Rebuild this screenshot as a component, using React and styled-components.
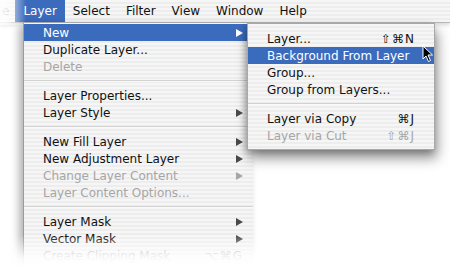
import React from 'react';
import styled, { createGlobalStyle } from 'styled-components';

const GlobalStyle = createGlobalStyle`
	html, body {
		margin: 0;
		padding: 0;
		background: #fff;
	}
`;

const stripes = `repeating-linear-gradient(to bottom, #f6f6f6 0px, #f6f6f6 2px, #ededed 2px, #ededed 4px)`;

const Page = styled.div`
	width: 450px;
	height: 277px;
	position: relative;
	overflow: hidden;
	background: #fff;
	font-family: "DejaVu Sans", "Liberation Sans", sans-serif;
	font-size: 12px;
	color: #111;
`;

const MenuBar = styled.div`
	display: flex;
	align-items: stretch;
	height: 22px;
	background: ${stripes};
	border-bottom: 1px solid #b8b8b8;
	box-shadow: 0 2px 4px rgba(0, 0, 0, 0.15);
	position: relative;

	&::before {
		content: '';
		position: absolute;
		top: 0;
		left: 0;
		bottom: -3px;
		width: 26px;
		background: linear-gradient(to right, rgba(255, 255, 255, 0.85) 20%, rgba(255, 255, 255, 0));
		z-index: 2;
	}
`;

const Title = styled.div`
	display: flex;
	align-items: center;
	padding: 0 8px;
	background: ${p => (p.$active ? '#3b6bbd' : 'transparent')};
	color: ${p => (p.$active ? '#fff' : '#111')};
`;

// tail of the "File" title, clipped by the screenshot
const Tail = styled(Title)`
	padding: 0 6px 0 2px;
	color: #888;
`;

const Body = styled.div`
	position: relative;
	padding-left: 23px;
`;

const Menu = styled.div`
	width: 229px;
	padding: 1px 0 4px;
	background: ${stripes};
	border-left: 1px solid #9a9a9a;
	box-shadow: -4px 2px 8px rgba(0, 0, 0, 0.3);
`;

const SubMenu = styled(Menu)`
	position: absolute;
	left: 247px;
	top: 0;
	width: 186px;
	padding: 6px 0 5px;
	border: 1px solid #a8a8a8;
	box-shadow: 2px 8px 12px rgba(0, 0, 0, 0.45), -2px 2px 6px rgba(0, 0, 0, 0.2);
	z-index: 3;
`;

const Item = styled.div`
	display: flex;
	align-items: center;
	height: 17px;
	padding: 0 ${p => p.$right}px 0 ${p => p.$left}px;
	background: ${p => (p.$selected ? '#3b6bbd' : 'transparent')};
	color: ${p => (p.$selected ? '#fff' : p.$disabled ? '#a6a6a6' : '#111')};
	white-space: nowrap;
`;

const Label = styled.span`
	flex: 1;
`;

const Shortcut = styled.span`
	letter-spacing: 1px;
`;

const Arrow = styled.span`
	width: 0;
	height: 0;
	border-top: 4.5px solid transparent;
	border-bottom: 4.5px solid transparent;
	border-left: 7px solid ${p => (p.$selected ? '#fff' : p.$disabled ? '#a6a6a6' : '#4a4a4a')};
`;

const Separator = styled.div`
	height: 12px;
	display: flex;
	align-items: center;

	&::after {
		content: '';
		flex: 1;
		height: 1px;
		background: #d2d2d2;
		border-bottom: 1px solid #fafafa;
	}
`;

const Fade = styled.div`
	position: absolute;
	left: 0;
	right: 0;
	bottom: 0;
	height: 42px;
	background: linear-gradient(to bottom, rgba(255, 255, 255, 0) 0%, rgba(255, 255, 255, 0.9) 55%, #fff 75%);
	z-index: 5;
`;

const Cursor = styled.svg`
	position: absolute;
	left: 422px;
	top: 45px;
	z-index: 6;
`;

const titles = ['Layer', 'Select', 'Filter', 'View', 'Window', 'Help'];

const mainItems = [
	{ label: 'New', arrow: true, selected: true },
	{ label: 'Duplicate Layer...' },
	{ label: 'Delete', disabled: true },
	null,
	{ label: 'Layer Properties...' },
	{ label: 'Layer Style', arrow: true },
	null,
	{ label: 'New Fill Layer', arrow: true },
	{ label: 'New Adjustment Layer', arrow: true },
	{ label: 'Change Layer Content', arrow: true, disabled: true },
	{ label: 'Layer Content Options...', disabled: true },
	null,
	{ label: 'Layer Mask', arrow: true },
	{ label: 'Vector Mask', arrow: true },
	{ label: 'Create Clipping Mask', shortcut: '⌥⌘G', disabled: true },
];

const subItems = [
	{ label: 'Layer...', shortcut: '⇧⌘N' },
	{ label: 'Background From Layer', selected: true },
	{ label: 'Group...' },
	{ label: 'Group from Layers...' },
	null,
	{ label: 'Layer via Copy', shortcut: '⌘J' },
	{ label: 'Layer via Cut', shortcut: '⇧⌘J', disabled: true },
];

const renderItems = (items, left, right) =>
	items.map((it, i) =>
		it === null ? (
			<Separator key={i} />
		) : (
			<Item key={i} $selected={it.selected} $disabled={it.disabled} $left={left} $right={right}>
				<Label>{it.label}</Label>
				{it.shortcut && <Shortcut>{it.shortcut}</Shortcut>}
				{it.arrow && <Arrow $selected={it.selected} $disabled={it.disabled} />}
			</Item>
		)
	);

const App = () => {
	return (
		<Page>
			<GlobalStyle />
			<MenuBar>
				<Tail>e</Tail>
				{titles.map(t => (
					<Title key={t} $active={t === 'Layer'}>
						{t}
					</Title>
				))}
			</MenuBar>
			<Body>
				<Menu>{renderItems(mainItems, 19, 10)}</Menu>
				<SubMenu>{renderItems(subItems, 19, 19)}</SubMenu>
			</Body>
			<Cursor width="12" height="18" viewBox="0 0 12 18">
				<path d="M1 1 L1 14 L4 11 L6.5 16.5 L8.5 15.5 L6 10 L10.5 10 Z" fill="#000" stroke="#fff" strokeWidth="1" />
			</Cursor>
			<Fade />
		</Page>
	);
};

export default App;
